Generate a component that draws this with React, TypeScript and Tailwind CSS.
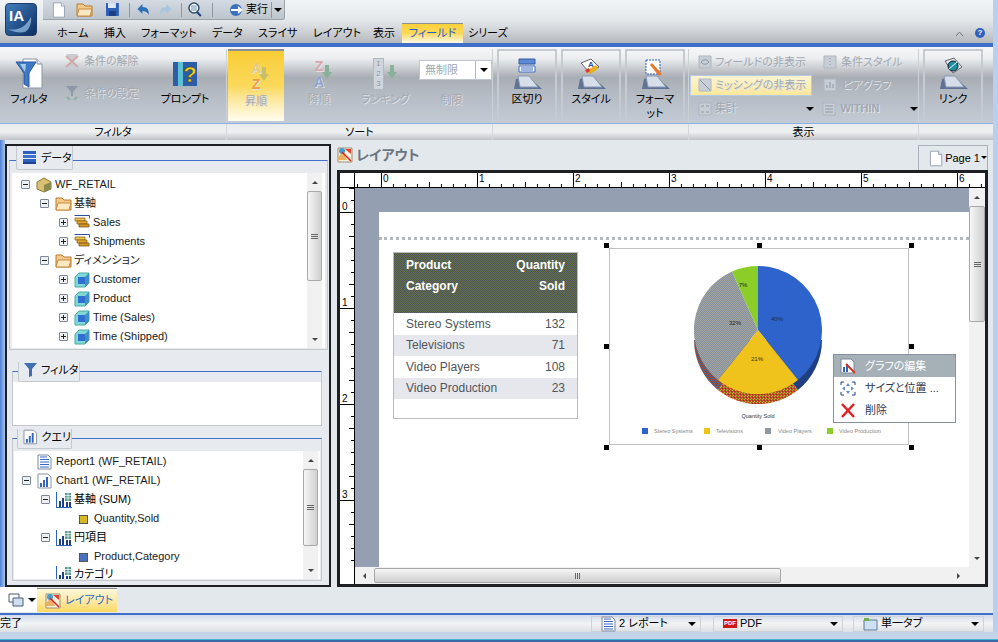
import React from "react";

const FONT = '"Liberation Sans","Noto Sans CJK JP",sans-serif';

const Funnel = () => (
  <svg width="28" height="32" viewBox="0 0 28 32">
    <path d="M8 1h14l5 5v24H8z" fill="#fff" stroke="#8a95a5" />
    <path d="M22 1v5h5" fill="#dde4ee" stroke="#8a95a5" />
    <path d="M1 4h20l-7 11v14l-5-3V15z" fill="#3f78c4" stroke="#28589c" />
    <path d="M5 6h6l-1 8z" fill="#a4caee" />
  </svg>
);
const Doc = ({ s = 20 }: { s?: number }) => (
  <svg width={s} height={s} viewBox="0 0 20 20"><path d="M3 1h10l4 4v14H3z" fill="#fff" stroke="#8a95a5" /><path d="M13 1v4h4" fill="#dde4ee" stroke="#8a95a5" /></svg>
);
const Folder = ({ s = 17 }: { s?: number }) => (
  <svg width={s} height={s} viewBox="0 0 17 17"><path d="M1 3h6l2 2h7v10H1z" fill="#f2c98a" stroke="#b97a2c" /><path d="M3 8h13l-2 7H1z" fill="#fbe9c4" stroke="#c98a3c" /></svg>
);
const Cube = () => (
  <svg width="16" height="16" viewBox="0 0 16 16"><path d="M1 5l4-4h10v10l-4 4H1z" fill="#7fdad6" stroke="#4aa8a8" /><path d="M4 5h7v7H4z" fill="#2f6fd0" /><path d="M11 5l4-4v10l-4 4z" fill="#3f8fc8" /></svg>
);
const Fact = () => (
  <svg width="16" height="16" viewBox="0 0 16 16"><path d="M0.500 0.500h15v3" fill="none" stroke="#2b4f9c" /><path d="M1 3h10v3H1z" fill="#f0c050" stroke="#7a5a10" strokeWidth=".7" /><path d="M3 6h10v3H3z" fill="#e8a838" stroke="#7a5a10" strokeWidth=".7" /><path d="M5 9h10v3H5z" fill="#d89828" stroke="#6a4a10" strokeWidth=".7" /></svg>
);
const Bars = () => (
  <svg width="16" height="16" viewBox="0 0 16 16"><path d="M0 0v16h16v-1H1V0z" fill="#2b5fc0" /><path d="M3 9h2v6H3zM6 6h2v9H6z" fill="#1f3f80" /><path d="M9 1h6v8H9z" fill="#5a9a90" /><path d="M9 3.500h6M9 6h6M12 1v8" stroke="#fff" strokeWidth=".7" /><path d="M10 10h2v5h-2zM13 10h2v5h-2z" fill="#1f3f80" /></svg>
);
const ChartDoc = () => (
  <svg width="15" height="16" viewBox="0 0 15 16"><path d="M1 1h10l3 3v11H1z" fill="#fff" stroke="#8a95a5" /><path d="M3 10h2v4H3zM6 7h2v7H6zM9 4h2v10H9z" fill="#3566b8" /></svg>
);
const PageLines = () => (
  <svg width="15" height="16" viewBox="0 0 15 16"><path d="M1 1h10l3 3v11H1z" fill="#fff" stroke="#7a88a0" /><path d="M3 3h7M3 5.500h9M3 8h9M3 10.500h9M3 13h9" stroke="#3566c8" /></svg>
);
const LayoutIcon = () => (
  <svg width="16" height="16" viewBox="0 0 16 16"><path d="M1 1h14v14H1z" fill="#f8f2dc" stroke="#a09070" /><path d="M1 10l5-5 4 8H1z" fill="#e8b060" /><circle cx="5" cy="4" r="3" fill="#3f9fd0" /><path d="M8 2h6v5z" fill="#e04030" /><path d="M5 5l9 9" stroke="#e02020" strokeWidth="1.500" /></svg>
);
const Box = ({ minus }: { minus?: boolean }) => (
  <span className="w-[9px] h-[9px] border border-[#7b8794] bg-[#eef1f4] rounded-[1px] relative shrink-0 block">
    <span className="absolute left-[1px] top-[3px] w-[5px] h-[1px] bg-[#222]" />
    {!minus && <span className="absolute left-[3px] top-[1px] w-[1px] h-[5px] bg-[#222]" />}
  </span>
);

const Arrow = ({ c = "" }: { c?: string }) => (
  <span className={`w-0 h-0 border-l-[4px] border-r-[4px] border-t-[4px] border-l-transparent border-r-transparent border-t-black inline-block ${c}`} />
);

const OFF = "text-[#a2a9b1] [text-shadow:1px_1px_0_#dfe3e8]";

const RibbonBtn = ({ label, icon, off, w, active, boxed }: { label: React.ReactNode; icon: React.ReactNode; off?: boolean; w: string; active?: boolean; boxed?: boolean }) => (
  <div className={`${w} shrink-0 flex flex-col items-center text-[11px] leading-[14px] text-center whitespace-nowrap ${off ? OFF : "text-black"} ${boxed ? "h-[74px] border-2 border-[#c6cbd1] pt-[6px]" : "h-[72px] pt-[8px]"} ${active ? "bg-gradient-to-b from-[#f8cd35] via-[#fbd95a] to-[#fffdf0] border-t-2 border-[#8b8f94]" : ""}`}>
    <div className="h-[34px] flex items-center justify-center">{icon}</div>
    <div className="mt-[1px]">{label}</div>
  </div>
);

const SmallRow = ({ label, icon, c = "" }: { label: string; icon: React.ReactNode; c?: string }) => (
  <div className={`flex items-center gap-[3px] text-[11px] whitespace-nowrap ${OFF} ${c}`}>{icon}<span>{label}</span></div>
);

const Ghost = ({ d = "M3 4h8M3 7h8M3 10h8" }: { d?: string }) => (
  <svg width="14" height="14" viewBox="0 0 14 14" className="shrink-0"><path d="M1 1h12v12H1z" fill="#c8ced6" stroke="#aeb6c0" /><path d={d} stroke="#8d97a4" fill="none" /></svg>
);

const Stand = ({ top }: { top: React.ReactNode }) => (
  <svg width="34" height="34" viewBox="0 0 34 34">
    <path d="M6 22l12-3 14 13H4z" fill="#5f7293" />
    <path d="M8 19l11 0 9 11H10z" fill="#d6deea" stroke="#8a9ab4" />
    {top}
  </svg>
);

const Panel = ({ title, icon, c, tab, line, head, body, children }: { title: string; icon: React.ReactNode; c: string; tab: string; line: string; head: string; body: string; children?: React.ReactNode }) => (
  <div className={`${c} shrink-0 flex flex-col relative`}>
    <div className={`${tab} absolute z-10 flex items-center pl-[5px] gap-[4px] text-[11px] leading-[14px] whitespace-nowrap bg-[#e7ebef] border-b border-r border-l border-[#c4c9ce] rounded-b-[2px]`}>{icon}<span>{title}</span></div>
    <div className={`${line} shrink-0`} />
    <div className={`flex-1 min-h-0 flex flex-col border border-[#c3c8cd] border-t-[#3f6fc8] ${body}`}>
      <div className={`${head} shrink-0`} />
      <div className="flex-1 min-h-0 bg-white overflow-hidden">{children}</div>
    </div>
  </div>
);

const VBar = ({ thumbH, w = "w-[15px]" }: { thumbH: string; w?: string }) => (
  <div className={`${w} h-full bg-[#f1f1f1] flex flex-col items-center shrink-0`}>
    <div className="h-[18px] shrink-0 flex items-center"><span className="w-0 h-0 border-l-[3px] border-r-[3px] border-b-[3px] border-l-transparent border-r-transparent border-b-[#444]" /></div>
    <div className="flex-1 w-full min-h-0">
      <div className={`${thumbH} w-full border border-[#a8a8a8] rounded-[2px] bg-gradient-to-r from-[#f6f6f6] to-[#cfcfcf] flex flex-col gap-[1px] items-center justify-center`}>
        <i className="w-[7px] h-[1px] bg-[#666]" /><i className="w-[7px] h-[1px] bg-[#666]" /><i className="w-[7px] h-[1px] bg-[#666]" />
      </div>
    </div>
    <div className="h-[18px] shrink-0 flex items-center"><span className="w-0 h-0 border-l-[3px] border-r-[3px] border-t-[3px] border-l-transparent border-r-transparent border-t-[#444]" /></div>
  </div>
);

const Row = ({ indent, box, icon, label }: { indent: number; box?: "m" | "p"; icon: React.ReactNode; label: string }) => (
  <div className="h-[19px] flex items-center text-[11px] text-[#1a1a1a] whitespace-nowrap" style={{ paddingLeft: indent }}>
    <span className="w-[15px] shrink-0">{box && <Box minus={box === "m"} />}</span>
    <span className="w-[19px] shrink-0 flex">{icon}</span>
    <span>{label}</span>
  </div>
);

const Handle = ({ x, y }: { x: number; y: number }) => (
  <span className="absolute w-[5px] h-[5px] bg-black" style={{ left: x, top: y }} />
);

const rulerTop = Array.from({ length: 54 }, (_, i) => i);
const rulerLeft = Array.from({ length: 32 }, (_, i) => i);

const Pie = () => (
  <svg width="134" height="140" viewBox="0 0 134 140" className="absolute left-[84px] top-[17px]">
    <defs>
      <pattern id="d1" width="3" height="3" patternUnits="userSpaceOnUse"><rect width="3" height="3" fill="#cc4a2c" /><rect width="1" height="1" fill="#8bce2a" /><rect x="2" y="1" width="1" height="1" fill="#8bce2a" /><rect x="1" y="2" width="1" height="1" fill="#8a3a20" /></pattern>
      <pattern id="d2" width="2" height="2" patternUnits="userSpaceOnUse"><rect width="2" height="2" fill="#a0503a" /><rect width="1" height="1" fill="#4a5a80" /><rect x="1" y="1" width="1" height="1" fill="#4a5a80" /></pattern>
      <pattern id="d3" width="2" height="2" patternUnits="userSpaceOnUse"><rect width="2" height="2" fill="#858fa0" /><rect width="1" height="1" fill="#a3a69c" /><rect x="1" y="1" width="1" height="1" fill="#a3a69c" /></pattern>
    </defs>
    <path d="M64 74L128 74A64 64 0 0 1 104 124z" fill="#1f3f80" />
    <path d="M24 124A64 64 0 0 0 104 124L64 74z" fill="url(#d1)" />
    <path d="M0 74A64 64 0 0 0 24 124L64 74z" fill="url(#d2)" />
    <path d="M64 0A64 64 0 0 1 104 114L64 64z" fill="#2f63cc" />
    <path d="M64 64L104 114A64 64 0 0 1 24 114z" fill="#efc21c" />
    <path d="M64 64L24 114A64 64 0 0 1 38 5.500z" fill="url(#d3)" />
    <path d="M64 64L38 5.500A64 64 0 0 1 64 0z" fill="#8bce2a" />
    <text x="83" y="55" fontSize="6" textAnchor="middle" fill="#1a2a50">40%</text>
    <text x="63" y="95" fontSize="6" textAnchor="middle" fill="#40300a">21%</text>
    <text x="41" y="59" fontSize="6" textAnchor="middle" fill="#222">32%</text>
    <text x="49" y="21" fontSize="6" textAnchor="middle" fill="#222">7%</text>
  </svg>
);

const SortIcon = ({ a, b, ca, cb, ar }: { a: string; b: string; ca: string; cb: string; ar: string }) => (
  <div className="relative w-[26px] h-[32px] text-[14px] leading-[16px] font-bold">
    <span className={`block ${ca}`}>{a}</span>
    <span className={`block ${cb}`}>{b}</span>
    <svg width="10" height="14" viewBox="0 0 10 14" className="absolute right-0 top-[7px]"><path d="M3 0h4v7h3l-5 7-5-7h3z" fill={ar} /></svg>
  </div>
);

export default function App() {
  return (
    <div className="w-[998px] h-[642px] overflow-hidden flex flex-col bg-[#e3e8ec] text-black [font-feature-settings:'palt']" style={{ fontFamily: FONT }}>
      <div className="h-[632px] shrink-0 flex">
        <div className="w-[993px] shrink-0 flex flex-col">
          {/* top bar */}
          <div className="h-[43px] shrink-0 flex bg-gradient-to-b from-[#f2f5f8] via-[#e3e6e9] to-[#b5b9bd]">
            <div className="w-[43px] shrink-0 pl-[5px] pt-[3px]">
              <div className="w-[32px] h-[33px] rounded-[4px] bg-gradient-to-br from-[#3f7fc0] to-[#0f2f60] border border-[#1c3c70] text-white text-[15px] font-bold leading-[24px] pl-[3px] relative">
                IA
                <svg width="30" height="31" viewBox="0 0 30 31" className="absolute left-0 top-0"><path d="M2 25c9 2 17-1 23-12 1 6-2 13-6 15-6 1-12 0-17-3z" fill="#9cc4ea" opacity=".7" /></svg>
              </div>
            </div>
            <div className="flex-1 flex flex-col min-w-0">
              <div className="h-[20px] shrink-0 w-[242px] flex items-center bg-gradient-to-b from-[#d5dbe2] to-[#bcc4cc] border-r border-b border-[#9aa2aa] rounded-br-[3px] pl-[8px]">
                <Doc s={16} />
                <span className="ml-[9px]"><Folder s={17} /></span>
                <svg width="15" height="15" viewBox="0 0 15 15" className="ml-[12px]"><path d="M1 1h13v13H1z" fill="#2d5fb8" /><path d="M3 1h8v5H3z" fill="#dfe8f4" /><path d="M4 9h7v5H4z" fill="#1f3f80" /></svg>
                <span className="ml-[9px] w-[1px] h-[14px] bg-[#8e969e]" />
                <svg width="14" height="13" viewBox="0 0 13 13" className="ml-[6px]"><path d="M1 6l5-5v3c5 0 7 3 6 8-1-3-3-4-6-4v3z" fill="#2f6fb8" /></svg>
                <svg width="14" height="13" viewBox="0 0 13 13" className="ml-[9px]"><path d="M12 6L7 1v3C2 4 0 7 1 12c1-3 3-4 6-4v3z" fill="#a9c4de" /></svg>
                <span className="ml-[9px] w-[1px] h-[14px] bg-[#8e969e]" />
                <svg width="16" height="16" viewBox="0 0 16 16" className="ml-[5px]"><circle cx="7" cy="6" r="5" fill="#fff" stroke="#2b4f6c" strokeWidth="1.500" /><path d="M4 4h6M4 6h6M4 8h6" stroke="#6a8aa8" /><path d="M10 10l4 4" stroke="#1f3f80" strokeWidth="2" /></svg>
                <span className="ml-[9px] w-[1px] h-[14px] bg-[#8e969e]" />
                <svg width="17" height="14" viewBox="0 0 17 14" className="ml-[15px]"><circle cx="8" cy="7" r="6" fill="#3a70c0" /><path d="M3 6h7V3l5 4-5 4V8H3z" fill="#fff" /></svg>
                <span className="ml-[1px] text-[11px] whitespace-nowrap">実行</span>
                <span className="ml-[3px] h-[16px] w-[13px] border-l border-[#8e969e] flex items-center justify-center"><Arrow /></span>
              </div>
              <div className="h-[23px] flex items-end text-[11px]">
                <div className="flex items-center h-[20px] whitespace-nowrap">
                  <span className="w-[14px]" />
                  <span className="w-[47px]">ホーム</span>
                  <span className="w-[37px]">挿入</span>
                  <span className="w-[71px]">フォーマット</span>
                  <span className="w-[46px]">データ</span>
                  <span className="w-[55px]">スライサ</span>
                  <span className="w-[60px]">レイアウト</span>
                  <span className="w-[29px]">表示</span>
                </div>
                <div className="w-[61px] h-[20px] bg-gradient-to-b from-[#f9cf38] via-[#fdd95a] to-[#fff9e4] border-t border-[#8b8f94] text-[#1f5cd0] flex items-center justify-center">フィールド</div>
                <div className="h-[20px] flex items-center ml-[5px]">シリーズ</div>
                <div className="flex-1" />
                <div className="h-[20px] flex items-center gap-[12px] pr-[8px]">
                  <svg width="7" height="5" viewBox="0 0 7 5"><path d="M0 5l3.500-4L7 5" fill="none" stroke="#777" /></svg>
                  <span className="w-[10px] h-[10px] rounded-full bg-[#2f5fc0] text-white text-[8px] font-bold leading-[10px] text-center">?</span>
                </div>
              </div>
            </div>
          </div>
          <div className="h-[4px] shrink-0 bg-[#3f6fc8]" />

          {/* ribbon */}
          <div className="h-[93px] shrink-0 flex flex-col">
            <div className="h-[77px] shrink-0 flex pt-[2px] bg-[linear-gradient(#f6f7f8_0%,#eceef0_15%,#a9aeb4_40%,#b4bac2_60%,#c3cbd6_100%)] border-b border-[#8fb0e0] overflow-hidden">
              <div className="w-[227px] shrink-0 flex border-r border-[#ccd1d6]">
                <RibbonBtn w="w-[58px]" label="フィルタ" icon={<Funnel />} />
                <div className="w-[107px] shrink-0 flex flex-col gap-[15px] pt-[4px] pl-[7px]">
                  <SmallRow c="gap-[5px]" label="条件の解除" icon={<svg width="14" height="16" viewBox="0 0 14 16"><path d="M1 1h12L8 7v3l5 5H1l5-5V7z" fill="#c8ccd2" /><path d="M1 3l12 11M13 3L1 14" stroke="#d0a8a8" strokeWidth="2" /></svg>} />
                  <SmallRow c="gap-[5px]" label="条件の設定" icon={<svg width="14" height="16" viewBox="0 0 14 16"><path d="M1 1h12L8 7v4H6V7z" fill="#8d97a5" /><path d="M2 12l3 3M12 12l-3 3" stroke="#8db09a" strokeWidth="2" /></svg>} />
                </div>
                <RibbonBtn w="w-[40px]" label="プロンプト" icon={
                  <svg width="26" height="30" viewBox="0 0 26 30"><path d="M1 3h24v24H1z" fill="#2c5da8" /><path d="M6 3h5v24H6z" fill="#5ec0d0" /><text x="18" y="23" fontSize="22" fontWeight="bold" textAnchor="middle" fill="#f5d020" stroke="#333" strokeWidth=".5">?</text></svg>
                } />
              </div>
              <div className="w-[266px] shrink-0 flex border-r border-[#ccd1d6]">
                <div className="w-[1px] shrink-0" />
                <RibbonBtn active w="w-[56px]" label="昇順" off icon={<SortIcon a="A" b="Z" ca="text-[#e8c878]" cb="text-[#ee9e3a]" ar="#c8c068" />} />
                <RibbonBtn w="w-[70px]" label="降順" off icon={<SortIcon a="Z" b="A" ca="text-[#d8a8a8]" cb="text-[#8ea4cf]" ar="#8ab09a" />} />
                <RibbonBtn w="w-[62px]" label="ランキング" off icon={
                  <div className="relative w-[24px] h-[32px]">
                    <div className="w-[11px] text-[8px] leading-[10px] text-center bg-[#cfd5dc] border border-[#b0b8c0] text-[#8a929c]">1<br />2<br />3</div>
                    <svg width="10" height="14" viewBox="0 0 10 14" className="absolute right-0 top-[7px]"><path d="M3 0h4v7h3l-5 7-5-7h3z" fill="#8ab09a" /></svg>
                  </div>
                } />
                <div className="w-[73px] ml-[3px] shrink-0 flex flex-col items-center pt-[11px] text-[11px]">
                  <div className="w-full h-[20px] flex bg-white border border-[#c0c6cc] text-[#a2a9b1]">
                    <span className="flex-1 pl-[5px] leading-[18px]">無制限</span>
                    <span className="w-[16px] border-l border-[#b0b6bc] flex items-center justify-center"><Arrow /></span>
                  </div>
                  <div className={`mt-[12px] pr-[8px] ${OFF}`}>制限</div>
                </div>
              </div>
              <div className="w-[196px] shrink-0 flex gap-[4px] pl-[4px] border-r border-[#ccd1d6]">
                <RibbonBtn boxed w="w-[60px]" label="区切り" icon={<Stand top={<g><path d="M9 2h16v5H9z" fill="#5a8ad8" stroke="#3a5a9c" /><path d="M9 9h16v6H9z" fill="#fff" stroke="#3a6ac0" /><path d="M11 11h12M11 13h12" stroke="#3a6ac0" /></g>} />} />
                <RibbonBtn boxed w="w-[60px]" label="スタイル" icon={<Stand top={<g><path d="M7 6l10-4 8 8-9 6z" fill="#fff" stroke="#666" /><text x="14" y="10" fontSize="8" fontWeight="bold" fill="#2f4fb0">A</text><path d="M12 14l10-6 2 4-8 5z" fill="#e8b020" /><path d="M11 13l4-2 1 3-3 2z" fill="#d83a2a" /></g>} />} />
                <RibbonBtn boxed w="w-[60px]" label={<>フォーマ<br />ット</>} icon={<Stand top={<g><path d="M8 3h14v14H8z" fill="#fff" stroke="#2f5fc0" strokeDasharray="2 1" /><path d="M14 6l10 11-3 2L12 8z" fill="#e8782a" /></g>} />} />
              </div>
              <div className="w-[230px] shrink-0 flex flex-col border-r border-[#ccd1d6] pt-[2px]">
                <div className="h-[22px] shrink-0 flex items-center pl-[9px]">
                  <div className="w-[125px]"><SmallRow label="フィールドの非表示" icon={<Ghost d="M3 7c2-3 6-3 8 0-2 3-6 3-8 0z" />} /></div>
                  <SmallRow c="gap-[4px]" label="条件スタイル" icon={<Ghost d="M7 3v1M7 6v1M7 9v1" />} />
                </div>
                <div className="h-[24px] shrink-0 flex items-center">
                  <div className={`ml-[1px] w-[122px] h-[21px] shrink-0 bg-gradient-to-b from-[#fbf4d2] to-[#fde89a] border border-[#b9cbe4] flex items-center pl-[7px] gap-[3px] text-[11px] whitespace-nowrap ${OFF}`}><Ghost d="M2 2l10 10" />ミッシングの非表示</div>
                  <div className="ml-[11px]"><SmallRow c="gap-[5px]" label="ピアグラフ" icon={<Ghost d="M4 10V7M7 10V4M10 10V6" />} /></div>
                </div>
                <div className="h-[23px] shrink-0 flex items-center pl-[9px]">
                  <div className="w-[109px]"><SmallRow label="集計" icon={<Ghost d="M3 4h3M8 4h3M3 10h3M8 10h3" />} /></div>
                  <Arrow />
                  <div className="ml-[8px] w-[88px]"><SmallRow c="gap-[4px] font-bold" label="WITHIN" icon={<Ghost />} /></div>
                  <Arrow />
                </div>
              </div>
              <div className="pl-[4px] shrink-0">
                <RibbonBtn boxed w="w-[60px]" label="リンク" icon={<Stand top={<g><path d="M9 4l9-3 8 9-9 6z" fill="#dfe6ee" stroke="#666" /><circle cx="17" cy="9" r="5" fill="#1f8f9f" stroke="#123" /><path d="M13 12l8-7" stroke="#fff" /></g>} />} />
              </div>
            </div>
            <div className="h-[16px] shrink-0 flex text-[11px] bg-gradient-to-b from-[#e8eaec] via-[#eef0f2] to-[#bfc3c7] leading-[16px] text-center">
              <div className="w-[227px] border-r border-[#d3d7db]">フィルタ</div>
              <div className="w-[266px] border-r border-[#d3d7db]">ソート</div>
              <div className="w-[196px] border-r border-[#d3d7db]" />
              <div className="w-[230px] border-r border-[#d3d7db]">表示</div>
            </div>
          </div>

          {/* content */}
          <div className="h-[447px] shrink-0 flex">
            <div className="w-[5px] shrink-0 bg-gradient-to-r from-[#4f80d4] to-[#a8c4ea]" />
            {/* left */}
            <div className="w-[326px] h-[443px] mt-[4px] shrink-0 border-2 border-[#1e1f22] flex flex-col bg-[#e7ebef]">
              <Panel title="データ" c="h-[204px] ml-[2px] w-[319px]" tab="left-[7px] top-0 w-[57px] h-[24px]" line="h-[14px]" head="h-[12px]" body="px-[2px] pb-[1px]"
                icon={<svg width="15" height="15" viewBox="0 0 15 15"><rect x="1" y="1" width="13" height="3" fill="#2d5fc0" /><rect x="1" y="5" width="13" height="3" fill="#3a70d0" /><rect x="1" y="9" width="13" height="3" fill="#2d5fc0" /><rect x="1" y="12" width="13" height="2" fill="#1f3f90" /></svg>}>
                <div className="flex h-full pr-[3px]">
                  <div className="flex-1 pt-[2px] min-w-0 overflow-hidden">
                    <Row indent={9} box="m" label="WF_RETAIL" icon={<svg width="16" height="16" viewBox="0 0 16 16"><path d="M1 5l7-4 7 4v7l-7 3-7-3z" fill="#d8c070" stroke="#8a7a3a" /><path d="M8 8l7-3v7l-7 3z" fill="#8a8a50" /></svg>} />
                    <Row indent={28} box="m" label="基軸" icon={<Folder />} />
                    <Row indent={47} box="p" label="Sales" icon={<Fact />} />
                    <Row indent={47} box="p" label="Shipments" icon={<Fact />} />
                    <Row indent={28} box="m" label="ディメンション" icon={<Folder />} />
                    <Row indent={47} box="p" label="Customer" icon={<Cube />} />
                    <Row indent={47} box="p" label="Product" icon={<Cube />} />
                    <Row indent={47} box="p" label="Time (Sales)" icon={<Cube />} />
                    <Row indent={47} box="p" label="Time (Shipped)" icon={<Cube />} />
                    <Row indent={47} label="" icon={<Cube />} />
                  </div>
                  <VBar thumbH="h-[90px]" />
                </div>
              </Panel>
              <Panel title="フィルタ" c="h-[64px] mt-[12px] ml-[5px] w-[310px]" tab="left-[6px] top-0 w-[62px] h-[20px] pb-[4px]" line="h-[9px]" head="h-[10px]" body=""
                icon={<svg width="13" height="15" viewBox="0 0 13 15"><path d="M0 1h13L8 7v7l-3 1V7z" fill="#3f6fb0" /></svg>} />
              <Panel title="クエリ" c="h-[152px] mt-[3px] ml-[5px] w-[310px]" tab="left-[5px] top-0 w-[55px] h-[20px] pb-[4px]" line="h-[9px]" head="h-[12px]" body="px-[1px] pb-[1px]" icon={<ChartDoc />}>
                <div className="flex h-full pr-[2px]">
                  <div className="flex-1 min-w-0 pt-[1px] overflow-hidden">
                    <Row indent={8} label="Report1 (WF_RETAIL)" icon={<PageLines />} />
                    <Row indent={8} box="m" label="Chart1 (WF_RETAIL)" icon={<ChartDoc />} />
                    <div className="h-[19px] flex items-center text-[11px] pl-[27px]"><span className="w-[15px] shrink-0"><Box minus /></span><Bars /><span className="ml-[2px]">基軸 (SUM)</span></div>
                    <Row indent={46} label="Quantity,Sold" icon={<span className="w-[9px] h-[9px] mt-[1px] ml-[4px] bg-[#d8b820] border border-[#555]" />} />
                    <div className="h-[19px] flex items-center text-[11px] pl-[27px]"><span className="w-[15px] shrink-0"><Box minus /></span><Bars /><span className="ml-[2px]">円項目</span></div>
                    <Row indent={46} label="Product,Category" icon={<span className="w-[9px] h-[9px] mt-[1px] ml-[4px] bg-[#4a70c0] border border-[#555]" />} />
                    <div className="h-[15px] flex items-center text-[11px] leading-[14px] pl-[42px]"><Bars /><span className="ml-[2px]">カテゴリ</span></div>
                  </div>
                  <VBar thumbH="h-[77px]" />
                </div>
              </Panel>
            </div>

            {/* right */}
            <div className="w-[651px] ml-[6px] shrink-0 flex flex-col">
              <div className="h-[30px] shrink-0 flex">
                <div className="mt-[7px]"><LayoutIcon /></div>
                <span className="ml-[3px] mt-[6px] text-[14px] leading-[18px] font-bold text-[#6d7680]">レイアウト</span>
                <div className="flex-1" />
                <div className="w-[70px] h-[25px] mt-[5px] border border-[#aab3bc] border-b-0 flex items-center pl-[9px] gap-[1px] text-[11px] whitespace-nowrap"><Doc s={17} /><span>Page 1</span><span className="-mt-[2px] block w-0 h-0 border-l-[3px] border-r-[3px] border-t-[3px] border-l-transparent border-r-transparent border-t-black" /></div>
              </div>
              <div className="h-[417px] shrink-0 border-[3px] border-[#1e1f22] bg-white flex flex-col overflow-hidden">
                {/* top ruler */}
                <div className="h-[15px] shrink-0 flex text-[10px] leading-[10px] border-b border-black">
                  <div className="w-[15px] shrink-0 border-r border-black" />
                  <div className="flex-1 relative overflow-hidden">
                    {rulerTop.map((i) => (
                      <span key={i} className="absolute bottom-0 w-[1px] bg-black" style={{ left: 2 + i * 12, height: (i + 6) % 8 === 0 ? 14 : (i + 2) % 4 === 0 ? 5 : 3 }} />
                    ))}
                    {[0, 1, 2, 3, 4, 5, 6].map((n) => (
                      <span key={n} className="absolute top-[1px]" style={{ left: 28 + n * 96 }}>{n}</span>
                    ))}
                  </div>
                </div>
                <div className="flex-1 min-h-0 flex">
                  <div className="w-[15px] shrink-0 border-r border-black relative overflow-hidden text-[10px] leading-[10px]">
                    {rulerLeft.map((i) => (
                      <span key={i} className="absolute right-0 h-[1px] bg-black" style={{ top: i * 12, width: i % 8 === 2 ? 14 : i % 4 === 0 ? 5 : 3 }} />
                    ))}
                    {[0, 1, 2, 3].map((n) => (
                      <span key={n} className="absolute left-[2px]" style={{ top: 14 + n * 96 }}>{n}</span>
                    ))}
                  </div>
                  <div className="flex-1 min-w-0 flex flex-col">
                    <div className="h-[379px] shrink-0 flex">
                      {/* canvas */}
                      <div className="w-[614px] shrink-0 bg-[#949fb2] pl-[24px] pt-[24px] overflow-hidden">
                        <div className="w-full h-[400px] bg-white relative">
                          <div className="absolute left-0 right-0 top-[25px] border-t-[3px] border-dotted border-[#b4b8bc]" />
                          {/* table */}
                          <div className="absolute left-[14px] top-[40px] w-[185px] h-[167px] border border-[#b9bcbf] flex flex-col text-[12px] text-[#50555c]">
                            <div className="h-[60px] shrink-0 bg-[repeating-conic-gradient(#50565c_0_25%,#616f48_0_50%)] bg-[length:2px_2px] text-white font-bold px-[12px] pt-[2px] flex justify-between leading-[21px]">
                              <span>Product<br />Category</span>
                              <span className="text-right">Quantity<br />Sold</span>
                            </div>
                            {[["Stereo Systems", "132", ""], ["Televisions", "71", "bg-[#e6e7ec]"], ["Video Players", "108", ""], ["Video Production", "23", "bg-[#e6e7ec]"]].map(([a, b, c]) => (
                              <div key={a} className={`h-[21.500px] shrink-0 px-[12px] flex items-center justify-between ${c}`}><span>{a}</span><span>{b}</span></div>
                            ))}
                          </div>
                          {/* chart */}
                          <div className="absolute left-[230px] top-[36px] w-[300px] h-[197px] border border-[#bfc1c3] bg-white">
                            <Pie />
                            <div className="absolute left-0 right-0 top-[163px] pr-[2px] text-center text-[5.500px] text-[#333]">Quantity Sold</div>
                            <div className="absolute left-[32px] top-[178px] flex items-center text-[5.500px] text-[#888]">
                              <span className="w-[6px] h-[6px] bg-[#2f63cc] mr-[6px]" /><span className="w-[50px]">Stereo Systems</span>
                              <span className="w-[6px] h-[6px] bg-[#efc21c] mr-[6px]" /><span className="w-[49px]">Televisions</span>
                              <span className="w-[6px] h-[6px] bg-[#8f979f] mr-[7px]" /><span className="w-[49px]">Video Players</span>
                              <span className="w-[6px] h-[6px] bg-[#8bce2a] mr-[6px]" /><span>Video Production</span>
                            </div>
                          </div>
                          <Handle x={225} y={31} /><Handle x={378} y={31} /><Handle x={530} y={31} />
                          <Handle x={225} y={132} /><Handle x={530} y={132} />
                          <Handle x={225} y={233} /><Handle x={378} y={233} /><Handle x={530} y={233} />
                          {/* context menu */}
                          <div className="absolute left-[454px] top-[142px] w-[123px] h-[69px] border border-[#87929e] bg-white text-[11px] text-[#2c3a56] z-10">
                            <div className="h-[22px] bg-[#a5b1b7] flex items-center pl-[6px] gap-[9px] text-white">
                              <svg width="16" height="16" viewBox="0 0 16 16"><path d="M1 1h10l3 3v11H1z" fill="#fff" stroke="#7a88a0" /><path d="M3 9h2v5H3zM6 6h2v8H6z" fill="#3566b8" /><path d="M6 6l9 9" stroke="#d83020" strokeWidth="2" /></svg>グラフの編集
                            </div>
                            <div className="h-[22px] flex items-center pl-[6px] gap-[9px]">
                              <svg width="16" height="15" viewBox="0 0 16 15"><path d="M1 4V1h3M12 1h3v3M15 11v3h-3M4 14H1v-3" fill="none" stroke="#1f3f80" /><path d="M8 2l2 3H6zM8 13l2-3H6zM2 7.500l3-2v4zM14 7.500l-3-2v4z" fill="#5a8ad8" /></svg>サイズと位置 ...
                            </div>
                            <div className="h-[22px] flex items-center pl-[6px] gap-[9px]">
                              <svg width="16" height="15" viewBox="0 0 16 15"><path d="M2 1l12 13M14 1L2 14" stroke="#e02020" strokeWidth="2.500" /></svg>削除
                            </div>
                          </div>
                        </div>
                      </div>
                      <VBar thumbH="h-[116px]" w="w-[16px]" />
                    </div>
                    {/* h scroll */}
                    <div className="flex-1 flex items-center bg-[#f1f1f1]">
                      <span className="w-[19px] shrink-0 flex justify-center"><span className="w-0 h-0 border-t-[3px] border-b-[3px] border-r-[3px] border-t-transparent border-b-transparent border-r-[#444]" /></span>
                      <div className="w-[407px] h-[15px] border border-[#a8a8a8] rounded-[2px] bg-gradient-to-b from-[#f6f6f6] to-[#cfcfcf] flex items-center justify-center gap-[1px]">
                        <i className="w-[1px] h-[6px] bg-[#666]" /><i className="w-[1px] h-[6px] bg-[#666]" /><i className="w-[1px] h-[6px] bg-[#666]" />
                      </div>
                      <div className="flex-1" />
                      <span className="mr-[25px] w-0 h-0 border-t-[3px] border-b-[3px] border-l-[3px] border-t-transparent border-b-transparent border-l-[#444]" />
                    </div>
                  </div>
                </div>
              </div>
            </div>
          </div>

          {/* doc tabs */}
          <div className="h-[26px] shrink-0 flex">
            <div className="w-[37px] h-[25px] bg-white shrink-0 flex items-center pl-[8px] gap-[4px]">
              <svg width="16" height="16" viewBox="0 0 16 16"><path d="M1 2h10v8H1z" fill="#fff" stroke="#4a5a70" /><path d="M5 6h10v8H5z" fill="#cfe0f2" stroke="#4a5a70" /></svg>
              <Arrow />
            </div>
            <div className="w-[80px] h-[24px] mt-[1px] bg-gradient-to-b from-[#fff9dc] to-[#fbd860] border-t border-[#8b8f94] flex items-center pl-[8px] gap-[4px] text-[11px] text-[#2f6cc8]">
              <LayoutIcon />
              レイアウト
            </div>
          </div>

          {/* status */}
          <div className="h-[2px] shrink-0 bg-[#3f6fc8]" />
          <div className="h-[17px] shrink-0 flex items-center bg-gradient-to-b from-[#d3dcec] via-[#f2f3f5] to-[#dde0e3] text-[11px]">
            <span>完了</span>
            <div className="flex-1" />
            <div className="w-[110px] h-[16px] border border-[#cdd2d7] flex items-center justify-between pl-[9px] pr-[4px]"><span className="flex items-center gap-[3px]"><PageLines /><span>2 レポート</span></span><Arrow /></div>
            <div className="w-[130px] ml-[12px] h-[16px] border border-[#cdd2d7] flex items-center justify-between pl-[9px] pr-[4px]"><span className="flex items-center gap-[3px]"><span className="bg-[#d01818] text-white text-[6px] leading-[9px] font-bold px-[1px]">PDF</span><span>PDF</span></span><Arrow /></div>
            <div className="w-[131px] ml-[10px] mr-[9px] h-[16px] border border-[#cdd2d7] flex items-center justify-between pl-[9px] pr-[4px]"><span className="flex items-center gap-[3px]"><svg width="15" height="14" viewBox="0 0 15 14"><path d="M1 3h13v10H1z" fill="#cfe0f2" stroke="#5a7a9a" /><path d="M1 1h5v3H1z" fill="#6fb050" /></svg><span>単一タブ</span></span><Arrow /></div>
          </div>
        </div>
        <div className="flex-1 bg-[#b7d0ee]" />
      </div>
      <div className="h-[7px] shrink-0 bg-[#c4d4e8]" />
      <div className="h-[1px] shrink-0 bg-[#49b3d0]" />
      <div className="flex-1 bg-[#3a6aa8]" />
    </div>
  );
}
